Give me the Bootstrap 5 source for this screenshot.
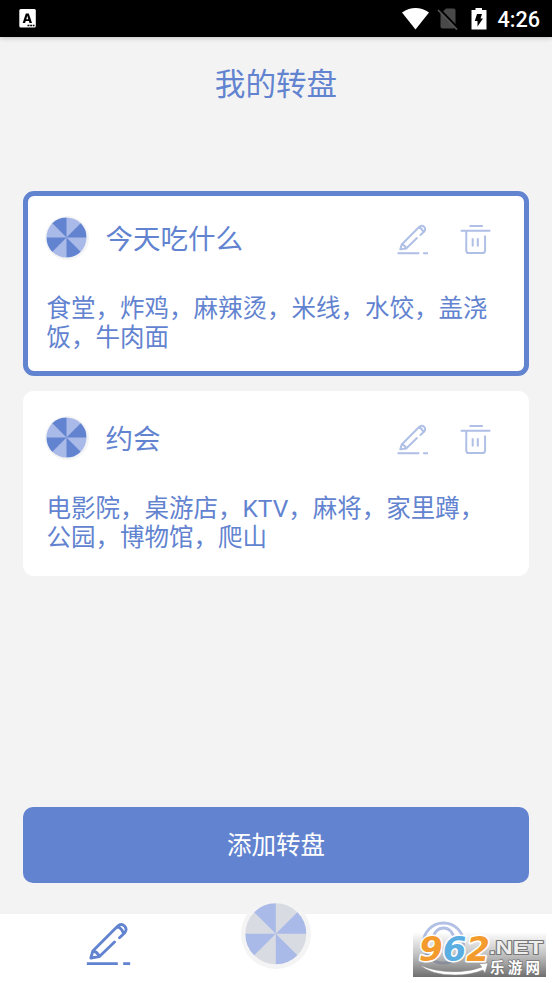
<!DOCTYPE html>
<html lang="zh-CN">
<head>
<meta charset="utf-8">
<meta name="viewport" content="width=device-width, initial-scale=1">
<title>我的转盘</title>
<link href="https://cdn.jsdelivr.net/npm/bootstrap@5.3.0/dist/css/bootstrap.min.css" rel="stylesheet">
<style>
body{font-family:Roboto,"Noto Sans CJK SC",sans-serif;background:#f3f3f3;color:#6283d0;height:983px;overflow:hidden}
svg{display:block;flex:none}
.status{height:37px;box-shadow:0 1px 5px rgba(0,0,0,.22);padding-left:19px;padding-right:12px;background:#000}
.clock{font-size:21.6px;line-height:37px;font-weight:500;margin-left:10px;padding-top:1px}
.page-title{font-size:30.6px;line-height:36px;height:153.5px;padding-top:30px;font-weight:400}
.wheels{padding:0 23px;gap:15px}
.wheel-card{height:185px;border:5px solid #fff;border-radius:11px;padding:20px 18px 0 16.5px;background:#fff;color:#6283d0}
.wheel-card.active{border-color:#6283d0}
.wheel-name{font-size:27.5px;line-height:32px;font-weight:400;margin-left:17px;padding-top:4px}
.wheel-items{font-size:24.5px;line-height:29.3px;margin:34.5px 0 0 2px;white-space:nowrap}
.tools{color:#b0bfe6;gap:31px;margin-right:15.5px;margin-top:3px}
.add-btn{height:76.5px;border-radius:10px;background:#6283d0;font-size:24.5px;color:#fff;border:0;padding-top:9px}
.add-wrap{padding:0 23px 31px}
.tabs{height:69px;background:#fff}
.tab-pen{margin-left:86px;margin-top:8px}
.tab-wheel{left:241px;top:-15px}
.tab-user{left:422px;top:6px}
.site-mark{left:413px;top:14px}
</style>
</head>
<body class="d-flex flex-column">
<svg width="0" height="0" class="position-absolute">
<defs>
<symbol id="pencil" viewBox="48 80 134 132"><g fill="none" stroke="currentColor" stroke-width="8.5" stroke-linecap="round" stroke-linejoin="round"><path d="M133 140L87 184L62 188L68 167L142 93Q153 83 163 92Q172 101 164 112L148 127M68 167Q82 169 87 184M141 94Q155 98 160 114"/><path stroke-linecap="butt" d="M50 205H143M159 205H180"/></g></symbol>
<symbol id="trash" viewBox="208 24 94 92"><g fill="none" stroke="currentColor" stroke-width="6"><path stroke-linecap="round" d="M239 29H275"/><path d="M210 43.500H300M227 43V103Q227 111 235 111H276Q284 111 284 103V58M246.500 66V91M262 66V91"/></g></symbol>
<symbol id="sectors" viewBox="-20 -20 40 40"><path d="M0 0V-20A20 20 0 0 0-14.140-14.140ZM0 0L14.140-14.140A20 20 0 0 1 20 0ZM0 0V20A20 20 0 0 0 14.140 14.140ZM0 0L-14.140 14.140A20 20 0 0 1-20 0Z"/></symbol>
<symbol id="disc" viewBox="0 0 44 44"><circle cx="22" cy="22" r="22" fill="#f4f4f6"/><circle cx="21.500" cy="21.500" r="20" fill="#a9bae8"/><use href="#sectors" x="1.500" y="1.500" width="40" height="40" fill="#6283d0"/></symbol>
</defs>
</svg>

<header class="status d-flex align-items-center text-white">
<svg width="17" height="19" viewBox="0 0 17 19"><rect x=".300" width="16.500" height="18.500" rx="1.500" fill="#fff"/><path fill="#000" fill-rule="evenodd" d="M6.800 4.500H9.800L13 14H10.500L9.900 12H6.700L6.100 14H3.700ZM8.300 6.800L7.300 10.200H9.300Z"/><path stroke="#000" stroke-width="1.300" stroke-dasharray="2 .700" d="M8.500 16.500H15.500"/></svg>
<svg class="ms-auto" width="27" height="22" viewBox="0 0 27 22"><path fill="#fff" d="M0 4.500Q13.500-4.300 27 4.500L13.500 21.500Z"/></svg>
<svg class="ms-2 me-1" width="22" height="22" viewBox="-1 0 22 22"><path fill="#494949" d="M8 .500H15.500Q17.500 .500 17.500 2.500V18.500Q17.500 20.500 15.500 20.500H4.500Q2.500 20.500 2.500 18.500V6Z"/><path d="M1 .500L20 20" stroke="#000" stroke-width="2"/><path d="M0 2L19 21.500" stroke="#555" stroke-width="1.700"/></svg>
<svg class="ms-2" width="16" height="22" viewBox="0 0 16 22"><path fill="#fff" d="M4.500 0H11V2H15.500V21.500H.500V2H4.500Z"/><path fill="#000" d="M6 6H11L9.500 10.500H12L6.500 18.500V13H3.800Z"/></svg>
<span class="clock">4:26</span>
</header>

<h1 class="page-title text-center m-0">我的转盘</h1>

<main class="wheels d-flex flex-column">
<section class="wheel-card active">
<div class="d-flex align-items-center">
<svg width="44" height="44"><use href="#disc"/></svg>
<h2 class="wheel-name mb-0">今天吃什么</h2>
<div class="tools d-flex ms-auto"><svg width="31.500" height="31"><use href="#pencil"/></svg><svg width="31" height="31"><use href="#trash"/></svg></div>
</div>
<p class="wheel-items">食堂，炸鸡，麻辣烫，米线，水饺，盖浇<br>饭，牛肉面</p>
</section>
<section class="wheel-card">
<div class="d-flex align-items-center">
<svg width="44" height="44"><use href="#disc"/></svg>
<h2 class="wheel-name mb-0">约会</h2>
<div class="tools d-flex ms-auto"><svg width="31.500" height="31"><use href="#pencil"/></svg><svg width="31" height="31"><use href="#trash"/></svg></div>
</div>
<p class="wheel-items">电影院，桌游店，KTV，麻将，家里蹲，<br>公园，博物馆，爬山</p>
</section>
</main>

<div class="add-wrap mt-auto"><button type="button" class="add-btn btn w-100">添加转盘</button></div>

<nav class="tabs position-relative d-flex flex-shrink-0 align-items-start">
<svg class="tab-pen" width="45" height="44"><use href="#pencil"/></svg>
<svg class="tab-wheel position-absolute" width="70" height="70" viewBox="0 0 70 70"><circle cx="35" cy="35" r="35" fill="#f4f4f4"/><circle cx="34.800" cy="34.800" r="30.500" fill="#d9dbe3"/><use href="#sectors" x="4.300" y="4.300" width="61" height="61" fill="#a9bae8"/></svg>
<svg class="tab-user position-absolute" width="44" height="46" viewBox="0 0 44 46" fill="none" stroke="#b3c0e5" stroke-width="2.800"><circle cx="21.500" cy="23" r="20"/><circle cx="21.500" cy="18" r="10"/></svg>
<svg class="site-mark position-absolute" width="134" height="50" viewBox="0 0 134 50">
<defs><linearGradient id="shade" x1="0" y1="0" x2="0" y2="1"><stop offset="0" stop-color="#777" stop-opacity="0"/><stop offset=".5" stop-color="#777" stop-opacity=".45"/><stop offset="1" stop-color="#6c6c6c" stop-opacity=".98"/></linearGradient></defs>
<rect y="4" width="133" height="45" fill="url(#shade)"/>
<path d="M7 37Q24 45 48 43.500Q60 42.500 69 39L66 36L75 35L72 45L70 42Q58 47 42 47Q18 47 7 37Z" fill="#fff" stroke="#888" stroke-width=".5"/>
<g font-weight="700" paint-order="stroke" stroke-linejoin="round">
<text x="6" y="32.500" font-family="DejaVu Sans,sans-serif" font-size="33" font-style="italic" textLength="71" lengthAdjust="spacingAndGlyphs" stroke="#fff" stroke-width="3"><tspan fill="#f49b2d">9</tspan><tspan fill="#5baee2">6</tspan><tspan fill="#f49b2d">2</tspan></text>
<text x="76" y="26" font-family="Liberation Sans,sans-serif" font-size="19" textLength="54" lengthAdjust="spacingAndGlyphs" fill="#eee" stroke="#777" stroke-width="2">.NET</text>
<text x="77" y="45" font-family="Noto Sans CJK SC,sans-serif" font-size="14.500" textLength="50" fill="#fff" stroke="#777" stroke-width="1.500">乐游网</text>
</g>
</svg>
</nav>
<script src="https://cdn.jsdelivr.net/npm/bootstrap@5.3.0/dist/js/bootstrap.bundle.min.js"></script>
</body>
</html>
